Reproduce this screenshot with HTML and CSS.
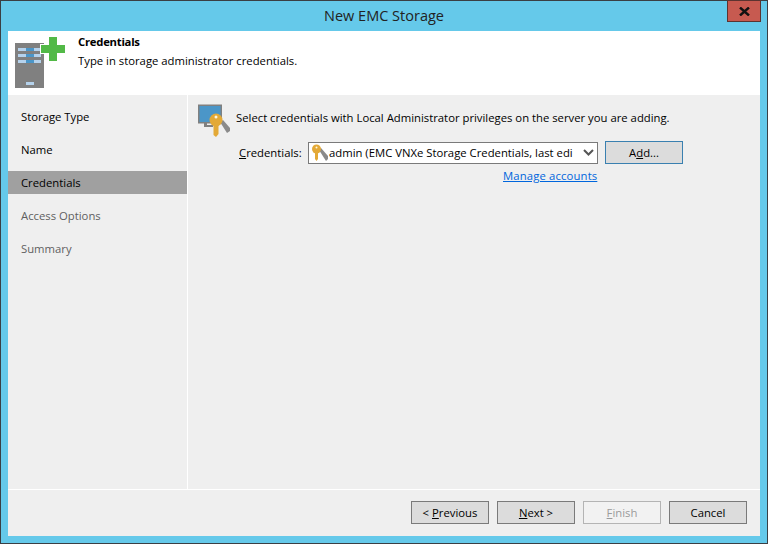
FILE: index.html
```html
<!DOCTYPE html>
<html lang="en">
<head>
    <meta charset="UTF-8">
    <meta name="viewport" content="width=device-width, initial-scale=1.0">
    <title>New EMC Storage</title>
    <link rel="stylesheet" href="styles.css">
</head>
<body>
    <div class="window">
        <div class="titlebar">New EMC Storage</div>
        <button class="close-btn" type="button" aria-label="Close">
            <svg width="11" height="9" viewBox="0 0 11 9"><path d="M1 0.5 L10 8.5 M10 0.5 L1 8.5" stroke="#111" stroke-width="2.4" fill="none"/></svg>
        </button>
        <div class="client">
            <header class="header">
                <svg class="header-icon" width="52" height="52" viewBox="0 0 52 52" shape-rendering="crispEdges">
                    <rect x="0" y="6" width="29" height="45" fill="#808080"/>
                    <rect x="3" y="11" width="8" height="3" fill="#b5d2ec"/><rect x="11" y="11" width="8" height="3" fill="#4b96c8"/><rect x="19" y="11" width="7" height="3" fill="#b5d2ec"/>
                    <rect x="3" y="17" width="8" height="3" fill="#b5d2ec"/><rect x="11" y="17" width="8" height="3" fill="#4b96c8"/><rect x="19" y="17" width="7" height="3" fill="#b5d2ec"/>
                    <rect x="3" y="23" width="8" height="3" fill="#b5d2ec"/><rect x="11" y="23" width="8" height="3" fill="#4b96c8"/><rect x="19" y="23" width="7" height="3" fill="#b5d2ec"/>
                    <rect x="11" y="45" width="8" height="3" fill="#b5d2ec"/>
                    <path d="M34 0h8v8h8v8h-8v8h-8v-8h-8v-8h8z" fill="#fff" stroke="#fff" stroke-width="2"/>
                    <path d="M34 0h8v8h8v8h-8v8h-8v-8h-8v-8h8z" fill="#52b947"/>
                </svg>
                <div class="header-text">
                    <div class="header-title">Credentials</div>
                    <div class="header-desc">Type in storage administrator credentials.</div>
                </div>
            </header>
            <div class="middle">
                <nav class="steps">
                    <div class="step">Storage Type</div>
                    <div class="step">Name</div>
                    <div class="step active">Credentials</div>
                    <div class="step pending">Access Options</div>
                    <div class="step pending">Summary</div>
                </nav>
                <main class="content">
                    <div class="intro">
                        <svg width="33" height="34" viewBox="0 0 33 34">
                            <rect x="0.75" y="2.25" width="22.5" height="17.5" fill="#4b96c8" stroke="#808080" stroke-width="1.5"/>
                            <path d="M6 20h3v2h6v2H6z" fill="#808080"/>
                            <path d="M22 19l3-2 7 8v3l-3 2z" fill="#8a8a8a"/>
                            <circle cx="18" cy="17" r="6.5" fill="#e3a937"/>
                            <circle cx="18" cy="14" r="1.5" fill="#fff7e0"/>
                            <path d="M15.5 22h5v9l-2.5 3-2.5-2z" fill="#e3a937"/>
                        </svg>
                        <span>Select credentials with Local Administrator privileges on the server you are adding.</span>
                    </div>
                    <div class="cred-row">
                        <label class="cred-label"><u>C</u>redentials:</label>
                        <div class="select">
                            <svg width="20" height="18" viewBox="0 0 20 18">
                                <path d="M9 6l2-2 7 8v3l-2 2z" fill="#8a8a8a"/>
                                <circle cx="6.5" cy="5" r="4.5" fill="#e3a937"/>
                                <circle cx="6.5" cy="3.5" r="1" fill="#fff7e0"/>
                                <path d="M5 8h3v7l-1.5 2-1.5-2z" fill="#e3a937"/>
                            </svg>
                            <span class="select-text">admin (EMC VNXe Storage Credentials, last edi</span>
                            <span class="select-arrow">
                                <svg width="11" height="7" viewBox="0 0 11 7"><path d="M1 1l4.5 4.5L10 1" stroke="#555" stroke-width="2" fill="none"/></svg>
                            </span>
                        </div>
                        <button class="btn focused" type="button">A<u>d</u>d...</button>
                    </div>
                    <a class="manage-link" href="#">Manage accounts</a>
                </main>
            </div>
            <footer class="footer">
                <button class="btn" type="button">&lt; <u>P</u>revious</button>
                <button class="btn" type="button"><u>N</u>ext &gt;</button>
                <button class="btn" type="button" disabled><u>F</u>inish</button>
                <button class="btn" type="button">Cancel</button>
            </footer>
        </div>
    </div>
</body>
</html>
```

FILE: styles.css
```css
html, body {
    margin: 0;
    padding: 0;
}
body {
    font-family: 'Open Sans', 'Noto Sans', sans-serif;
    font-size: 11.3px;
    color: #000;
}
.window {
    position: relative;
    box-sizing: border-box;
    width: 768px;
    height: 544px;
    background-color: #65c9ea;
    border: 1px solid #3a3f44;
    display: flex;
    flex-direction: column;
}
.titlebar {
    height: 30px;
    line-height: 29px;
    text-align: center;
    font-size: 14.5px;
    color: #222;
}
.close-btn {
    position: absolute;
    top: -1px;
    right: 6px;
    width: 34px;
    height: 22px;
    padding: 0;
    background-color: #c75a50;
    border: 1px solid #5c3330;
    display: flex;
    align-items: center;
    justify-content: center;
}
.client {
    flex: 1;
    margin: 0 7px 7px 7px;
    background-color: #efefef;
    display: flex;
    flex-direction: column;
}
.header {
    height: 64px;
    background-color: #fff;
    display: flex;
    padding-left: 7px;
    box-sizing: border-box;
}
.header-icon {
    margin-top: 6px;
}
.header-text {
    margin-left: 11px;
    padding-top: 3px;
}
.header-title {
    font-weight: bold;
    line-height: 16px;
    letter-spacing: -0.25px;
}
.header-desc {
    line-height: 18px;
    margin-top: 2px;
}
.middle {
    flex: 1;
    display: flex;
    border-bottom: 1px solid #fff;
}
.steps {
    width: 179px;
    padding-top: 10px;
    border-right: 1px solid #fff;
    display: flex;
    flex-direction: column;
    gap: 10px;
}
.step {
    height: 23px;
    line-height: 23px;
    padding-left: 13px;
}
.step.active {
    background-color: #a0a0a0;
}
.step.pending {
    color: #5f5f5f;
}
.content {
    flex: 1;
    padding: 8px 0 0 10px;
}
.intro {
    display: flex;
    align-items: flex-start;
    gap: 5px;
}
.intro span {
    line-height: 16px;
    margin-top: 7px;
}
.cred-row {
    display: flex;
    align-items: center;
    margin-top: 4px;
    padding-left: 41px;
}
.cred-label {
    width: 69px;
}
.select {
    box-sizing: border-box;
    width: 290px;
    height: 22px;
    background-color: #fff;
    border: 1px solid #7a7a7a;
    display: flex;
    align-items: center;
    padding-left: 1px;
}
.select-text {
    flex: 1;
    white-space: nowrap;
    overflow: hidden;
    margin-left: -1px;
}
.select-arrow {
    width: 18px;
    display: flex;
    justify-content: center;
}
.btn {
    box-sizing: border-box;
    width: 78px;
    height: 23px;
    padding: 0;
    font-family: inherit;
    font-size: 11.3px;
    color: #000;
    background-color: #dcdcdc;
    border: 1px solid #7a7a7a;
}
.btn:disabled {
    color: #9a9a9a;
    background-color: #f2f2f2;
    border-color: #b4b4b4;
}
.btn.focused {
    margin-left: 7px;
    border-color: #3a80b0;
}
.manage-link {
    display: block;
    width: 94px;
    margin: 4px 0 0 305px;
    color: #0066dd;
    white-space: nowrap;
    letter-spacing: 0.14px;
}
.footer {
    height: 46px;
    box-sizing: border-box;
    padding: 11px 13px 0 0;
    display: flex;
    justify-content: flex-end;
    gap: 8px;
}
```
